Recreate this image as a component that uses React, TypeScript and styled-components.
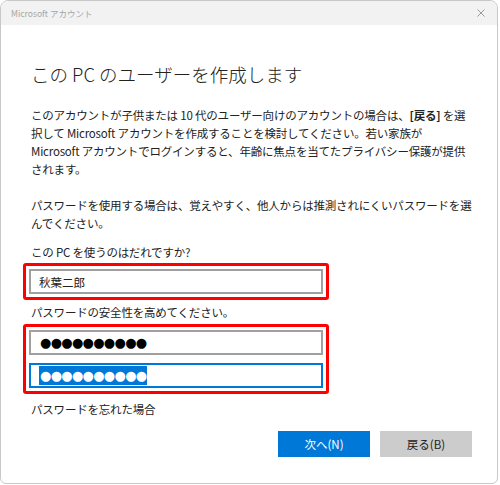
import styled, { createGlobalStyle } from 'styled-components'

const GlobalStyle = createGlobalStyle`
  html, body {
    margin: 0;
    padding: 0;
    background: #ffffff;
  }
  body {
    font-family: "Noto Sans CJK JP", "Noto Sans", sans-serif;
    color: #222;
  }
`

const Window = styled.div`
  width: 498px;
  height: 484px;
  box-sizing: border-box;
  border: 1px solid #c8c8c8;
  border-radius: 8px 8px 6px 6px;
  overflow: hidden;
  display: flex;
  flex-direction: column;
  background: #fff;
`

const TitleBar = styled.div`
  height: 24px;
  background: #f2f2f2;
  display: flex;
  align-items: center;
  justify-content: space-between;
  padding: 0 10px 0 10px;
  flex-shrink: 0;
`

const TitleText = styled.span`
  font-size: 8.5px;
  color: #a6a6a6;
`

const CloseIcon = styled.svg`
  width: 8px;
  height: 8px;
  margin-right: 2px;
`

const Content = styled.div`
  padding: 34px 30px 0 30px;
  display: flex;
  flex-direction: column;
`

const Heading = styled.h1`
  margin: 0;
  font-size: 18.5px;
  font-weight: 300;
  line-height: 30px;
  color: #222;
`

const Paragraph = styled.p<{ $top?: number }>`
  margin: ${({ $top }) => $top ?? 0}px 0 0 0;
  font-size: 11.5px;
  letter-spacing: -0.2px;
  line-height: 18px;
  white-space: nowrap;
  color: #222;
`

const Label = styled.div<{ $top?: number }>`
  margin-top: ${({ $top }) => $top ?? 0}px;
  font-size: 11.5px;
  letter-spacing: -0.2px;
  line-height: 18px;
  color: #222;
`

const Highlight = styled.div<{ $top?: number }>`
  margin: ${({ $top }) => $top ?? 0}px 0 0 -8px;
  width: 306px;
  box-sizing: border-box;
  border: 3px solid #ff0000;
  border-radius: 3px;
  padding: 3px;
  display: flex;
  flex-direction: column;
  gap: 8px;
`

const Field = styled.div<{ $focused?: boolean }>`
  height: 25px;
  box-sizing: border-box;
  border: 2px solid ${({ $focused }) => ($focused ? '#0078d7' : '#a0a0a0')};
  display: flex;
  align-items: center;
  padding-left: 8px;
  font-size: 11.5px;
  color: #222;
`

const Dots = styled.span<{ $selected?: boolean }>`
  font-family: "DejaVu Sans", sans-serif;
  font-size: 13px;
  letter-spacing: -0.7px;
  line-height: 19px;
  padding: 0 1px;
  color: ${({ $selected }) => ($selected ? '#fff' : '#000')};
  background: ${({ $selected }) => ($selected ? '#0078d7' : 'transparent')};
`

const Actions = styled.div`
  display: flex;
  justify-content: flex-end;
  gap: 10px;
  margin-top: 13px;
  margin-right: -5px;
`

const Button = styled.div<{ $primary?: boolean }>`
  width: 92px;
  height: 26px;
  display: flex;
  align-items: center;
  justify-content: center;
  font-size: 11.5px;
  background: ${({ $primary }) => ($primary ? '#0078d7' : '#cccccc')};
  color: ${({ $primary }) => ($primary ? '#fff' : '#222')};
`

const dots = '●●●●●●●●●●'

export default function App() {
  return (
    <>
      <GlobalStyle />
      <Window>
        <TitleBar>
          <TitleText>Microsoft アカウント</TitleText>
          <CloseIcon viewBox="0 0 8 8">
            <path d="M0.5 0.5 L7.5 7.5 M7.5 0.5 L0.5 7.5" stroke="#9a9a9a" strokeWidth="1" />
          </CloseIcon>
        </TitleBar>
        <Content>
          <Heading>この PC のユーザーを作成します</Heading>
          <Paragraph $top={17}>
            このアカウントが子供または 10 代のユーザー向けのアカウントの場合は、<b>[戻る]</b> を選<br />
            択して Microsoft アカウントを作成することを検討してください。若い家族が<br />
            Microsoft アカウントでログインすると、年齢に焦点を当てたプライバシー保護が提供<br />
            されます。
          </Paragraph>
          <Paragraph $top={18}>
            パスワードを使用する場合は、覚えやすく、他人からは推測されにくいパスワードを選<br />
            んでください。
          </Paragraph>
          <Label $top={11}>この PC を使うのはだれですか?</Label>
          <Highlight $top={2}>
            <Field>秋葉二郎</Field>
          </Highlight>
          <Label $top={3}>パスワードの安全性を高めてください。</Label>
          <Highlight $top={3}>
            <Field>
              <Dots>{dots}</Dots>
            </Field>
            <Field $focused>
              <Dots $selected>{dots}</Dots>
            </Field>
          </Highlight>
          <Label $top={6}>パスワードを忘れた場合</Label>
          <Actions>
            <Button $primary>次へ(N)</Button>
            <Button>戻る(B)</Button>
          </Actions>
        </Content>
      </Window>
    </>
  )
}
